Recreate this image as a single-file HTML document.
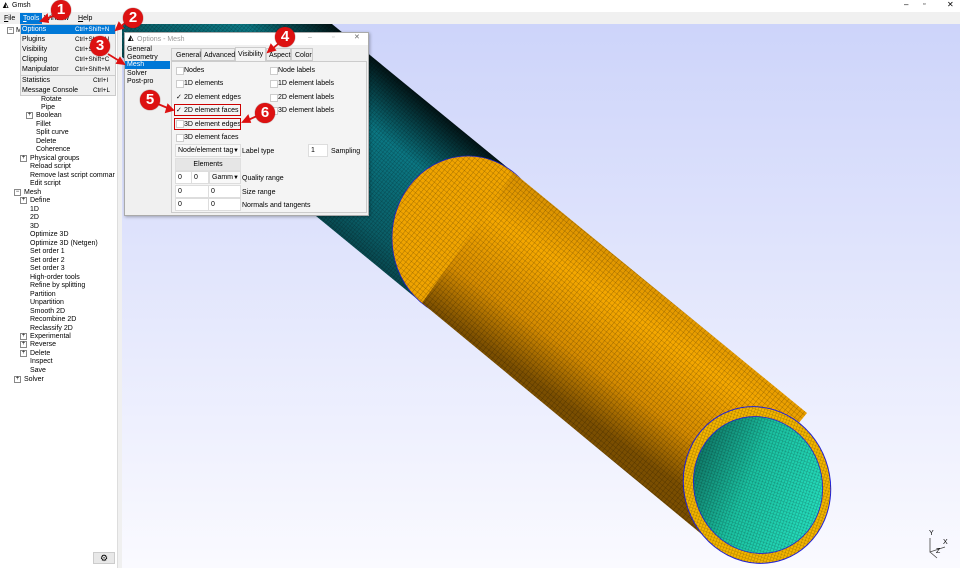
<!DOCTYPE html>
<html><head><meta charset="utf-8"><style>
*{margin:0;padding:0;box-sizing:border-box}
body{width:960px;height:568px;overflow:hidden;position:relative;background:#f0f0f0;font-family:"Liberation Sans",sans-serif;font-size:7px;color:#000}
.a{position:absolute;white-space:nowrap;line-height:9px}
.k{font-size:6.3px}
.tb{position:absolute;width:7px;height:7px;border:1px solid #888;background:#fff;font-size:6px;line-height:5px;text-align:center}
.cb{position:absolute;width:8px;height:8px;border:1px solid #ccc;background:#fff}
.in{position:absolute;background:#fff;border:1px solid #ddd;height:13px;padding-left:2px;line-height:12px}
.circ{position:absolute;width:20px;height:20px;border-radius:50%;background:#d11;color:#fff;font-size:15px;line-height:20px;text-align:center;font-weight:bold;box-shadow:0 0 1px #600}
</style></head><body>
<div style="position:absolute;left:0;top:0;width:960px;height:12px;background:#fff"></div>
<div class="a" style="left:3px;top:1px;font-weight:bold">◭</div>
<div class="a" style="left:12px;top:1px">Gmsh</div>
<div class="a" style="left:904px;top:0px;font-size:8px">–</div>
<div class="a" style="left:923px;top:0px;font-size:7px">▫</div>
<div class="a" style="left:947px;top:0px;font-size:8px">✕</div>
<div style="position:absolute;left:0;top:12px;width:960px;height:12px;background:#f0f0f0"></div>
<div class="a" style="left:4px;top:14px"><u>F</u>ile</div>
<div style="position:absolute;left:20px;top:13px;width:22px;height:11px;background:#0078d7"></div>
<div class="a" style="left:23px;top:14px;color:#fff"><u>T</u>ools</div>
<div class="a" style="left:44px;top:14px">Window</div>
<div class="a" style="left:78px;top:14px"><u>H</u>elp</div>
<div style="position:absolute;left:0;top:24px;width:118px;height:544px;background:#fff;border-right:1px solid #ddd"></div>
<div style="position:absolute;left:118px;top:24px;width:4px;height:544px;background:#f0f0f0"></div>
<div class="tb" style="left:7px;top:27px">−</div><div class="a" style="left:16px;top:26px">Modules</div>
<div class="a" style="left:41px;top:95px">Rotate</div>
<div class="a" style="left:41px;top:103px">Pipe</div>
<div class="tb" style="left:26px;top:112px">+</div><div class="a" style="left:36px;top:111px">Boolean</div>
<div class="a" style="left:36px;top:120px">Fillet</div>
<div class="a" style="left:36px;top:128px">Split curve</div>
<div class="a" style="left:36px;top:137px">Delete</div>
<div class="a" style="left:36px;top:145px">Coherence</div>
<div class="tb" style="left:20px;top:155px">+</div><div class="a" style="left:30px;top:154px">Physical groups</div>
<div class="a" style="left:30px;top:162px">Reload script</div>
<div class="a" style="left:30px;top:171px">Remove last script commar</div>
<div class="a" style="left:30px;top:179px">Edit script</div>
<div class="tb" style="left:14px;top:189px">−</div><div class="a" style="left:24px;top:188px">Mesh</div>
<div class="tb" style="left:20px;top:197px">+</div><div class="a" style="left:30px;top:196px">Define</div>
<div class="a" style="left:30px;top:205px">1D</div>
<div class="a" style="left:30px;top:213px">2D</div>
<div class="a" style="left:30px;top:222px">3D</div>
<div class="a" style="left:30px;top:230px">Optimize 3D</div>
<div class="a" style="left:30px;top:239px">Optimize 3D (Netgen)</div>
<div class="a" style="left:30px;top:247px">Set order 1</div>
<div class="a" style="left:30px;top:256px">Set order 2</div>
<div class="a" style="left:30px;top:264px">Set order 3</div>
<div class="a" style="left:30px;top:273px">High-order tools</div>
<div class="a" style="left:30px;top:281px">Refine by splitting</div>
<div class="a" style="left:30px;top:290px">Partition</div>
<div class="a" style="left:30px;top:298px">Unpartition</div>
<div class="a" style="left:30px;top:307px">Smooth 2D</div>
<div class="a" style="left:30px;top:315px">Recombine 2D</div>
<div class="a" style="left:30px;top:324px">Reclassify 2D</div>
<div class="tb" style="left:20px;top:333px">+</div><div class="a" style="left:30px;top:332px">Experimental</div>
<div class="tb" style="left:20px;top:341px">+</div><div class="a" style="left:30px;top:340px">Reverse</div>
<div class="tb" style="left:20px;top:350px">+</div><div class="a" style="left:30px;top:349px">Delete</div>
<div class="a" style="left:30px;top:357px">Inspect</div>
<div class="a" style="left:30px;top:366px">Save</div>
<div class="tb" style="left:14px;top:376px">+</div><div class="a" style="left:24px;top:375px">Solver</div>
<div style="position:absolute;left:93px;top:552px;width:22px;height:12px;background:#e8e8e8;border:1px solid #ccc;text-align:center;font-size:9px;line-height:10px">⚙</div>
<div style="position:absolute;left:20px;top:24px;width:96px;height:72px;background:#f0f0f0;border:1px solid #ccc"></div>
<div style="position:absolute;left:21px;top:25px;width:94px;height:9px;background:#0078d7"></div>
<div class="a" style="left:22px;top:25px;color:#fff">Options</div><div class="a k" style="left:75px;top:25px;color:#fff">Ctrl+Shift+N</div>
<div class="a" style="left:22px;top:35px">Plugins</div><div class="a k" style="left:75px;top:35px">Ctrl+Shift+U</div>
<div class="a" style="left:22px;top:45px">Visibility</div><div class="a k" style="left:75px;top:45px">Ctrl+Shift+V</div>
<div class="a" style="left:22px;top:55px">Clipping</div><div class="a k" style="left:75px;top:55px">Ctrl+Shift+C</div>
<div class="a" style="left:22px;top:65px">Manipulator</div><div class="a k" style="left:75px;top:65px">Ctrl+Shift+M</div>
<div style="position:absolute;left:21px;top:75px;width:94px;height:1px;background:#ccc"></div>
<div class="a" style="left:22px;top:76px">Statistics</div><div class="a k" style="left:93px;top:76px">Ctrl+I</div>
<div class="a" style="left:22px;top:86px">Message Console</div><div class="a k" style="left:93px;top:86px">Ctrl+L</div>
<svg style="position:absolute;left:122px;top:24px" width="838" height="544" viewBox="122 24 838 544">
<defs>
<linearGradient id="bg" x1="0" y1="0" x2="0" y2="1"><stop offset="0" stop-color="#cdd4fa"/><stop offset="1" stop-color="#fafaff"/></linearGradient>
<linearGradient id="og" gradientUnits="userSpaceOnUse" x1="514" y1="173" x2="422" y2="303"><stop offset="0" stop-color="#d89000"/><stop offset="0.3" stop-color="#f5a800"/><stop offset="0.7" stop-color="#d68c00"/><stop offset="1" stop-color="#7a4e00"/></linearGradient>
<linearGradient id="tg" gradientUnits="userSpaceOnUse" x1="412" y1="90" x2="272" y2="262"><stop offset="0" stop-color="#021416"/><stop offset="0.25" stop-color="#0b7783"/><stop offset="0.6" stop-color="#0a5d66"/><stop offset="1" stop-color="#031214"/></linearGradient>
<pattern id="mesh" width="4" height="4" patternUnits="userSpaceOnUse" patternTransform="rotate(39)"><path d="M0 0H4M0 0V4" stroke="#000" stroke-width="0.6" stroke-opacity="0.5" fill="none"/></pattern>
<pattern id="mesh2" width="3" height="3" patternUnits="userSpaceOnUse" patternTransform="rotate(39)"><path d="M0 0H3M0 0V3" stroke="#000" stroke-width="0.6" stroke-opacity="0.45" fill="none"/></pattern>
<linearGradient id="ig" x1="0" y1="0" x2="1" y2="1"><stop offset="0" stop-color="#0a5a50"/><stop offset="0.45" stop-color="#1bc0a0"/><stop offset="1" stop-color="#28e4c4"/></linearGradient>
</defs>
<rect x="122" y="24" width="838" height="544" fill="url(#bg)"/>
<polygon points="514,173 332,24 82,24 422,303" fill="url(#tg)"/>
<polygon points="514,173 332,24 82,24 422,303" fill="url(#mesh2)"/>
<ellipse cx="468" cy="238" rx="76" ry="82" fill="#f0a400" stroke="#2222cc" stroke-width="0.8"/>
<ellipse cx="468" cy="238" rx="76" ry="82" fill="url(#mesh)"/>
<polygon points="514,173 807,413 705,537 422,303" fill="url(#og)"/>
<polygon points="514,173 807,413 705,537 422,303" fill="url(#mesh)"/>
<ellipse cx="757" cy="485" rx="73" ry="79" transform="rotate(-20 757 485)" fill="#f2b400" stroke="#2222dd" stroke-width="1"/>
<ellipse cx="757" cy="485" rx="73" ry="79" transform="rotate(-20 757 485)" fill="url(#mesh2)"/>
<ellipse cx="758" cy="485" rx="64" ry="69" transform="rotate(-20 758 485)" fill="url(#ig)" stroke="#2222dd" stroke-width="0.8"/>
<ellipse cx="758" cy="485" rx="64" ry="69" transform="rotate(-20 758 485)" fill="url(#mesh2)"/>
<g stroke="#444" stroke-width="0.8" fill="none"><path d="M930 538V552L945 547M930 552L937 558"/></g>
<text x="929" y="535" font-size="7" font-family="Liberation Sans">Y</text>
<text x="943" y="544" font-size="7" font-family="Liberation Sans">X</text>
<text x="936" y="553" font-size="7" font-family="Liberation Sans">Z</text>
</svg>
<div style="position:absolute;left:124px;top:32px;width:245px;height:184px;background:#f0f0f0;border:1px solid #aaa;box-shadow:1px 1px 3px rgba(0,0,0,.3)"></div>
<div style="position:absolute;left:125px;top:33px;width:243px;height:12px;background:#fff"></div>
<div class="a" style="left:128px;top:34px;font-weight:bold">◭</div>
<div class="a" style="left:137px;top:35px;color:#999">Options - Mesh</div>
<div class="a" style="left:308px;top:33px;color:#999">–</div>
<div class="a" style="left:332px;top:33px;color:#bbb">▫</div>
<div class="a" style="left:354px;top:33px;color:#666">✕</div>
<div class="a" style="left:127px;top:45px">General</div>
<div class="a" style="left:127px;top:53px">Geometry</div>
<div style="position:absolute;left:125px;top:61px;width:45px;height:8px;background:#0078d7"></div>
<div class="a" style="left:127px;top:60px;color:#fff">Mesh</div>
<div class="a" style="left:127px;top:69px">Solver</div>
<div class="a" style="left:127px;top:77px">Post-pro</div>
<div style="position:absolute;left:171px;top:48px;width:30px;height:13px;border:1px solid #ccc;background:#eee"></div><div class="a" style="left:176px;top:51px">General</div>
<div style="position:absolute;left:201px;top:48px;width:34px;height:13px;border:1px solid #ccc;background:#eee"></div><div class="a" style="left:204px;top:51px">Advanced</div>
<div style="position:absolute;left:235px;top:47px;width:31px;height:15px;border:1px solid #ccc;border-bottom:none;background:#f4f4f4"></div><div class="a" style="left:238px;top:50px">Visibility</div>
<div style="position:absolute;left:266px;top:48px;width:25px;height:13px;border:1px solid #ccc;background:#eee"></div><div class="a" style="left:269px;top:51px">Aspect</div>
<div style="position:absolute;left:291px;top:48px;width:22px;height:13px;border:1px solid #ccc;background:#eee"></div><div class="a" style="left:295px;top:51px">Color</div>
<div style="position:absolute;left:171px;top:61px;width:196px;height:152px;border:1px solid #ccc;background:#f4f4f4"></div>
<div class="cb" style="left:176px;top:67px"></div><div class="a" style="left:184px;top:66px">Nodes</div>
<div class="cb" style="left:176px;top:80px"></div><div class="a" style="left:184px;top:79px">1D elements</div>
<div class="a" style="left:176px;top:93px">✓</div><div class="a" style="left:184px;top:93px">2D element edges</div>
<div class="a" style="left:176px;top:106px">✓</div><div class="a" style="left:184px;top:106px">2D element faces</div>
<div class="cb" style="left:176px;top:120px"></div><div class="a" style="left:184px;top:120px">3D element edges</div>
<div class="cb" style="left:176px;top:134px"></div><div class="a" style="left:184px;top:133px">3D element faces</div>
<div class="cb" style="left:270px;top:67px"></div><div class="a" style="left:278px;top:66px">Node labels</div>
<div class="cb" style="left:270px;top:80px"></div><div class="a" style="left:278px;top:79px">1D element labels</div>
<div class="cb" style="left:270px;top:94px"></div><div class="a" style="left:278px;top:93px">2D element labels</div>
<div class="cb" style="left:270px;top:107px"></div><div class="a" style="left:278px;top:106px">3D element labels</div>
<div style="position:absolute;left:174px;top:104px;width:67px;height:12px;border:1.5px solid #c00"></div>
<div style="position:absolute;left:174px;top:118px;width:67px;height:12px;border:1.5px solid #c00"></div>
<div class="in" style="left:175px;top:144px;width:66px;background:#f8f8f8">Node/element tag<span style="position:absolute;right:1px;font-size:6px">▼</span></div>
<div class="a" style="left:242px;top:147px">Label type</div>
<div class="in" style="left:308px;top:144px;width:20px">1</div>
<div class="a" style="left:331px;top:147px">Sampling</div>
<div style="position:absolute;left:175px;top:158px;width:66px;height:13px;background:#e6e6e6;border:1px solid #e0e0e0;text-align:center;line-height:11px">Elements</div>
<div class="in" style="left:175px;top:171px;width:17px">0</div>
<div class="in" style="left:191px;top:171px;width:18px">0</div>
<div class="in" style="left:209px;top:171px;width:32px;background:#f8f8f8">Gamm<span style="position:absolute;right:1px;font-size:6px">▼</span></div>
<div class="a" style="left:242px;top:174px">Quality range</div>
<div class="in" style="left:175px;top:185px;width:34px">0</div>
<div class="in" style="left:208px;top:185px;width:33px">0</div>
<div class="a" style="left:242px;top:188px">Size range</div>
<div class="in" style="left:175px;top:198px;width:34px">0</div>
<div class="in" style="left:208px;top:198px;width:33px">0</div>
<div class="a" style="left:242px;top:201px">Normals and tangents</div>
<svg style="position:absolute;left:0;top:0" width="960" height="568">
<g stroke="#d11" stroke-width="1.8" fill="#d11">
<line x1="55" y1="15" x2="44" y2="20"/><polygon points="41,21 47,15 48,22"/>
<line x1="126" y1="22" x2="119" y2="28"/><polygon points="116,30 119,23 123,28"/>
<line x1="108" y1="54" x2="121" y2="62"/><polygon points="124,64 117,63 120,58"/>
<line x1="278" y1="44" x2="271" y2="50"/><polygon points="268,52 271,45 275,50"/>
<line x1="158" y1="104" x2="170" y2="109"/><polygon points="173,110 166,112 168,105"/>
<line x1="257" y1="116" x2="246" y2="121"/><polygon points="243,122 248,116 250,122"/>
</g></svg>
<div class="circ" style="left:51px;top:0px">1</div>
<div class="circ" style="left:123px;top:8px">2</div>
<div class="circ" style="left:90px;top:36px">3</div>
<div class="circ" style="left:275px;top:27px">4</div>
<div class="circ" style="left:140px;top:90px">5</div>
<div class="circ" style="left:255px;top:103px">6</div>
</body></html>
